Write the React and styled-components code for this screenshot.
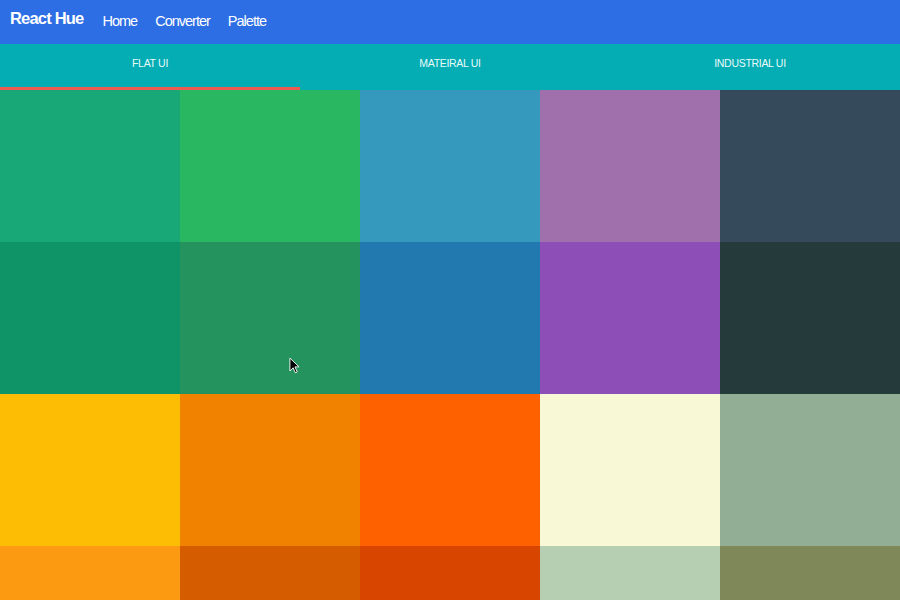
import React, { useState } from "react";
import styled, { createGlobalStyle } from "styled-components";

const GlobalStyle = createGlobalStyle`
  * { box-sizing: border-box; }
  body {
    margin: 0;
    font-family: "Liberation Sans", Arial, sans-serif;
    overflow: hidden;
  }
`;

const palettes = {
  flat: [
    "#18a878", "#29b861", "#3499bd", "#a070ac", "#354a5b",
    "#0f9468", "#25935d", "#2279b0", "#8e4eb8", "#243a3b",
    "#fdbd05", "#f18200", "#fd6100", "#f8f8d6", "#92ae95",
    "#fc9b12", "#d55d00", "#d84500", "#b6cfb2", "#7f8858",
  ],
};

const tabs = [
  { key: "flat", label: "Flat UI" },
  { key: "material", label: "Mateiral UI" },
  { key: "industrial", label: "Industrial UI" },
];

export default function App() {
  const [active, setActive] = useState("flat");
  const colors = palettes[active] || palettes.flat;

  return (
    <Page>
      <GlobalStyle />
      <NavBar>
        <Brand>React Hue</Brand>
        <NavLink>Home</NavLink>
        <NavLink>Converter</NavLink>
        <NavLink>Palette</NavLink>
      </NavBar>
      <TabBar>
        {tabs.map((t) => (
          <Tab key={t.key} $active={active === t.key} onClick={() => setActive(t.key)}>
            {t.label}
          </Tab>
        ))}
      </TabBar>
      <Grid>
        {colors.map((c, i) => (
          <Swatch key={i} $color={c} />
        ))}
        <Cursor viewBox="0 0 12 18">
          <path d="M1 1 L1 15 L4.5 11.5 L7 17 L9 16 L6.5 10.5 L11 10.5 Z" fill="#000" stroke="#fff" strokeWidth="1" />
        </Cursor>
      </Grid>
    </Page>
  );
}

const Page = styled.div`
  width: 900px;
  height: 600px;
  overflow: hidden;
  display: flex;
  flex-direction: column;
`;

const NavBar = styled.nav`
  flex-shrink: 0;
  height: 44px;
  background: #2e6ee4;
  display: flex;
  align-items: center;
  padding: 0 10px;
  gap: 18px;
  color: #fff;
`;

const Brand = styled.span`
  font-size: 16.5px;
  font-weight: bold;
  margin-top: -7px;
  margin-right: 1px;
  letter-spacing: -0.8px;
`;

const NavLink = styled.a`
  font-size: 14.5px;
  letter-spacing: -1px;
  color: #fff;
  text-decoration: none;
  margin-top: -3px;
  cursor: pointer;
`;

const TabBar = styled.div`
  flex-shrink: 0;
  height: 46px;
  background: #04acb3;
  display: grid;
  grid-template-columns: repeat(3, 1fr);
`;

const Tab = styled.div`
  display: flex;
  align-items: center;
  justify-content: center;
  padding-bottom: 5px;
  font-size: 10.5px;
  letter-spacing: -0.3px;
  text-transform: uppercase;
  color: #e8fbfb;
  cursor: pointer;
  border-bottom: 3px solid ${(p) => (p.$active ? "#ef5a4f" : "transparent")};
`;

const Grid = styled.div`
  position: relative;
  flex-shrink: 0;
  display: grid;
  grid-template-columns: repeat(5, 180px);
  grid-auto-rows: 152px;
`;

const Swatch = styled.div`
  background: ${(p) => p.$color};
`;

const Cursor = styled.svg`
  position: absolute;
  left: 289px;
  top: 267px;
  width: 11px;
  height: 17px;
`;
